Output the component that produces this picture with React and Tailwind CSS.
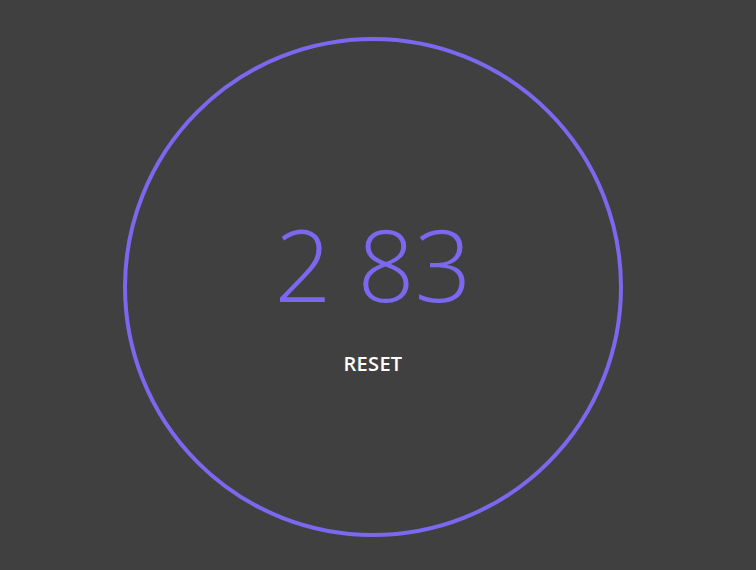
export default function App() {
  return (
    <div className="w-[756px] h-[570px] bg-[#404040] overflow-hidden pt-[37px]" style={{ fontFamily: '"Open Sans", sans-serif' }}>
      <div className="ml-[123px] w-[500px] h-[500px] rounded-full border-[4px] border-[#7b68ee] flex flex-col items-center">
        <div className="mt-[172px] text-[100px] leading-[100px] font-light text-[#7b68ee]">2 83</div>
        <div className="mt-[39px] text-[20px] leading-[24px] font-semibold tracking-[0.3px] text-white">RESET</div>
      </div>
    </div>
  );
}
